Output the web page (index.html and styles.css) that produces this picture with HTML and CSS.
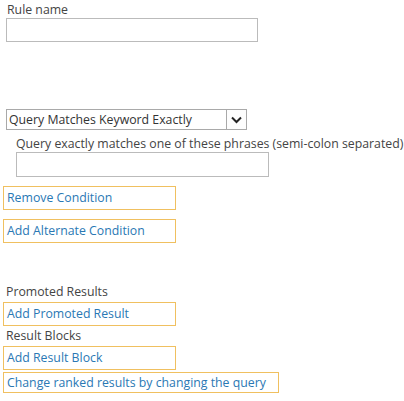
FILE: index.html
```html
<!DOCTYPE html>
<html>
<head>
<meta charset="utf-8">
<link rel="stylesheet" href="styles.css">
</head>
<body>
<div class="page">
  <div class="label">Rule name</div>
  <div class="textbox rule-name"></div>

  <div class="select">
    <span class="select-text">Query Matches Keyword Exactly</span>
    <span class="select-arrow">
      <svg width="11" height="8" viewBox="0 0 11 8"><path d="M1 1.5 L5.5 6 L10 1.5" fill="none" stroke="#222" stroke-width="2"/></svg>
    </span>
  </div>

  <div class="condition">
    <div class="label">Query exactly matches one of these phrases (semi-colon separated)</div>
    <div class="textbox phrases"></div>
  </div>

  <a class="action remove">Remove Condition</a>
  <a class="action alternate">Add Alternate Condition</a>

  <div class="label section promoted">Promoted Results</div>
  <a class="action tight">Add Promoted Result</a>
  <div class="label section blocks">Result Blocks</div>
  <a class="action tight">Add Result Block</a>
  <a class="action wide">Change ranked results by changing the query</a>
</div>
</body>
</html>
```

FILE: styles.css
```css
html, body {
  margin: 0;
  padding: 0;
  background: #fff;
}
.page {
  font-family: "Open Sans", "Noto Sans", sans-serif;
  font-size: 12.3px;
  color: #444;
  padding: 2px 0 0 0;
  display: flex;
  flex-direction: column;
  align-items: flex-start;
}
.label {
  line-height: 16px;
  margin-left: 7px;
  white-space: nowrap;
}
.textbox {
  box-sizing: border-box;
  border: 1px solid #bbb;
  background: #fff;
}
.rule-name {
  width: 252px;
  height: 24px;
  margin-left: 6px;
}
.select {
  box-sizing: border-box;
  margin-top: 67px;
  margin-left: 6px;
  width: 241px;
  height: 21px;
  border: 1px solid #a9a9a9;
  display: flex;
  align-items: center;
  justify-content: space-between;
}
.select-text {
  padding-left: 2px;
  color: #333;
}
.select-arrow {
  box-sizing: border-box;
  width: 20px;
  height: 19px;
  border-left: 1px solid #a9a9a9;
  display: flex;
  align-items: center;
  justify-content: center;
  background: #fdfdfd;
}
.condition {
  margin-left: 9px;
  margin-top: 6px;
}
.phrases {
  width: 253px;
  height: 25px;
  margin-left: 7px;
}
.action {
  box-sizing: border-box;
  display: block;
  width: 173px;
  height: 24px;
  margin-left: 3px;
  border: 1px solid #f0c060;
  color: #2a78b4;
  line-height: 21px;
  padding-left: 3px;
  white-space: nowrap;
  cursor: pointer;
}
.remove { margin-top: 9px; }
.alternate { margin-top: 9px; }
.section.promoted { margin-top: 41px; margin-left: 6px; }
.section.blocks { margin-top: 2px; margin-left: 6px; }
.tight { margin-top: 2px; }
.wide { width: 276px; height: 21px; line-height: 19px; margin-top: 2px; }
```
